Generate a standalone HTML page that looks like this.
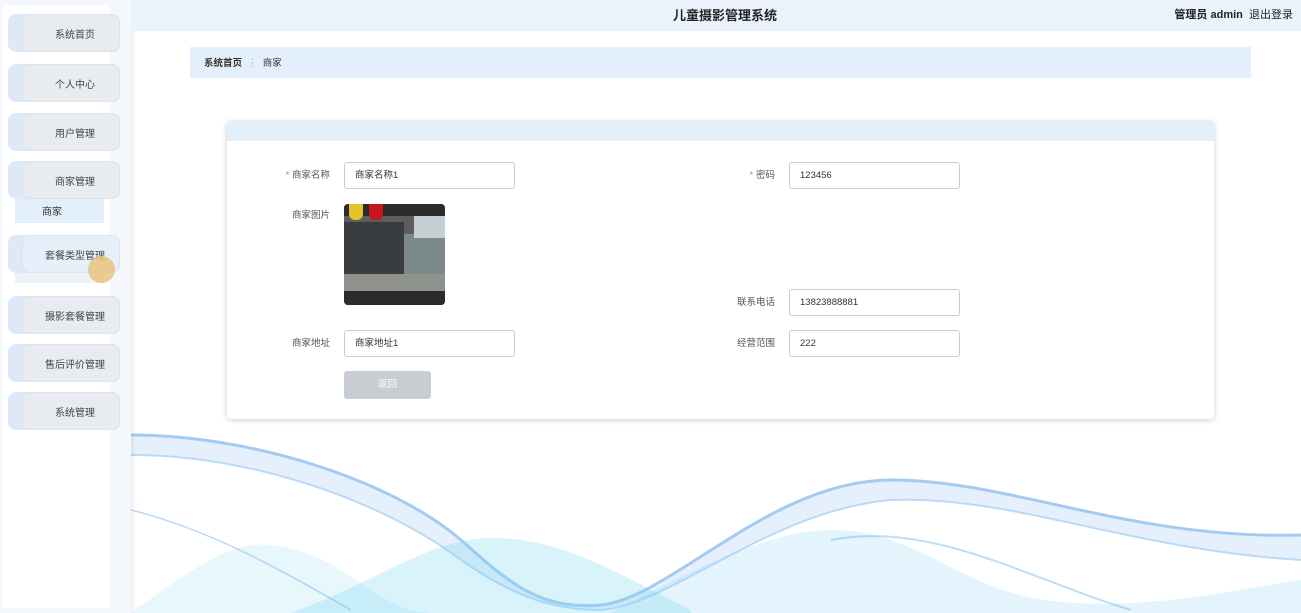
<!DOCTYPE html>
<html><head><meta charset="utf-8"><style>
*{box-sizing:border-box;margin:0;padding:0}
body{width:1301px;height:613px;overflow:hidden;position:relative;background:#fff;font-family:"Liberation Sans","Noto Sans CJK SC",sans-serif;font-size:10px;color:#333}
.abs{position:absolute}
#side{left:0;top:0;width:131px;height:613px;background:#f4f8fd;box-shadow:2px 0 4px rgba(0,0,0,.08)}
.sb{position:absolute;left:8px;width:112px;height:38px;background:#dde9f9;border-radius:8px}
.sb div{position:absolute;left:14px;top:0;right:0;bottom:0;background:#e8ecf1;border:1px solid #dde2e8;border-radius:8px;text-align:center;line-height:42px;font-size:10px;color:#444;padding-left:8px}
#hdr{left:131px;top:0;width:1170px;height:31px;background:#eaf2fc}
.lbl{position:absolute;text-align:right;width:100px;font-size:9.5px;color:#555;line-height:27px}
.lbl b{color:#f56c6c;font-weight:normal}
.inp{position:absolute;width:171px;height:27px;border:1px solid #c6ccd6;border-radius:3px;background:#fff;line-height:25px;padding-left:10px;font-size:9.5px;color:#333}
</style></head><body>
<svg class="abs" style="left:131px;top:420px" width="1170" height="193" viewBox="0 0 1170 193">
<path d="M0 15 C120 15 260 60 330 120 C380 165 410 190 470 185 C540 178 640 60 760 60 C880 60 1000 120 1170 115" stroke="#5b9ee8" stroke-width="3" fill="none" opacity=".55"/>
<path d="M0 35 C120 35 250 80 330 140 C380 175 420 190 470 190 C540 185 640 90 760 80 C880 75 1000 130 1170 140" stroke="#6fb3ee" stroke-width="2" fill="none" opacity=".45"/>
<path d="M0 15 C120 15 260 60 330 120 C380 165 410 190 470 185 C540 178 640 60 760 60 C880 60 1000 120 1170 115 L1170 140 C1000 130 880 75 760 80 C640 90 540 185 470 190 C420 190 380 175 330 140 C250 80 120 35 0 35Z" fill="#a9cef5" opacity=".3"/>
<path d="M0 193 C60 150 100 120 140 125 C220 135 240 190 300 193Z" fill="#9ee0f3" opacity=".25"/>
<path d="M160 193 C250 160 300 118 360 118 C430 118 480 150 560 190 L560 193Z" fill="#7fd6f0" opacity=".3"/>
<path d="M480 193 C560 150 640 110 700 110 C780 110 820 160 900 178 C1000 195 1100 170 1170 160 L1170 193Z" fill="#8fd4f2" opacity=".25"/>
<path d="M0 90 C80 110 150 150 220 190" stroke="#7ab4ea" stroke-width="1.5" fill="none" opacity=".5"/>
<path d="M700 120 C800 100 900 160 1000 190" stroke="#5ab0e4" stroke-width="2" fill="none" opacity=".4"/>
</svg>
<div id="side" class="abs">
<div class="abs" style="left:2px;top:5px;width:108px;height:603px;background:#fff"></div>
<div class="sb" style="top:14px"><div>系统首页</div></div>
<div class="sb" style="top:64px"><div>个人中心</div></div>
<div class="sb" style="top:113px"><div>用户管理</div></div>
<div class="sb" style="top:161px"><div>商家管理</div></div>
<div class="abs" style="left:15px;top:199px;width:89px;height:24px;background:#e3eefb;line-height:28px;padding-left:27px;font-size:10px;color:#333">商家</div>
<div class="abs" style="left:15px;top:250px;width:89px;height:33px;background:#eef1f6"></div>
<div class="sb" style="top:235px"><div style="background:#e6f0fb">套餐类型管理</div></div>
<div class="abs" style="left:88px;top:256px;width:27px;height:27px;border-radius:50%;background:#e9c37e;opacity:.85"></div>
<div class="sb" style="top:296px"><div>摄影套餐管理</div></div>
<div class="sb" style="top:344px"><div>售后评价管理</div></div>
<div class="sb" style="top:392px"><div>系统管理</div></div>
</div>
<div id="hdr" class="abs"></div>
<div class="abs" style="left:0;width:1450px;top:5px;text-align:center;font-size:13px;font-weight:bold;color:#222">儿童摄影管理系统</div>
<div class="abs" style="right:8px;top:6px;font-size:11px;color:#222"><b>管理员 admin</b>&nbsp; 退出登录</div>
<div class="abs" style="left:190px;top:47px;width:1061px;height:31px;background:#e3effb;line-height:33px;padding-left:14px;font-size:9.5px;color:#333"><b style="font-weight:bold">系统首页</b> <span style="color:#999;margin:0 3px">⋮</span> 商家</div>
<div class="abs" style="left:227px;top:121px;width:987px;height:298px;background:#fff;border-radius:4px;box-shadow:0 1px 6px rgba(0,0,0,.2);overflow:hidden">
<div style="height:20px;background:#e3effb"></div>
</div>
<div class="lbl" style="left:230px;top:162px"><b>* </b>商家名称</div>
<div class="inp" style="left:344px;top:162px">商家名称1</div>
<div class="lbl" style="left:675px;top:162px"><b>* </b>密码</div>
<div class="inp" style="left:789px;top:162px">123456</div>
<div class="lbl" style="left:230px;top:204px;line-height:24px">商家图片</div>
<div class="abs" style="left:344px;top:204px;width:101px;height:101px;border-radius:4px;overflow:hidden;background:#5a5e5f">
<div class="abs" style="left:0;top:0;width:101px;height:12px;background:#2b2b2b"></div>
<div class="abs" style="left:5px;top:0;width:14px;height:16px;background:#e6c22a;border-radius:0 0 6px 6px"></div>
<div class="abs" style="left:25px;top:0;width:14px;height:16px;background:#c8161d;border-radius:0 0 6px 6px"></div>
<div class="abs" style="left:0;top:18px;width:60px;height:55px;background:#3a3d40"></div>
<div class="abs" style="left:60px;top:30px;width:41px;height:40px;background:#7a8a88"></div>
<div class="abs" style="left:70px;top:12px;width:31px;height:22px;background:#c5cfd4"></div>
<div class="abs" style="left:0;top:70px;width:101px;height:17px;background:#8f918d"></div>
<div class="abs" style="left:0;top:87px;width:101px;height:14px;background:#2b2b2b"></div>
</div>
<div class="lbl" style="left:675px;top:289px">联系电话</div>
<div class="inp" style="left:789px;top:289px">13823888881</div>
<div class="lbl" style="left:230px;top:330px">商家地址</div>
<div class="inp" style="left:344px;top:330px">商家地址1</div>
<div class="lbl" style="left:675px;top:330px">经营范围</div>
<div class="inp" style="left:789px;top:330px">222</div>
<div class="abs" style="left:344px;top:371px;width:87px;height:28px;background:#c8cdd4;border-radius:3px;color:#fff;text-align:center;line-height:28px;font-size:9.5px">返回</div>
</body></html>
